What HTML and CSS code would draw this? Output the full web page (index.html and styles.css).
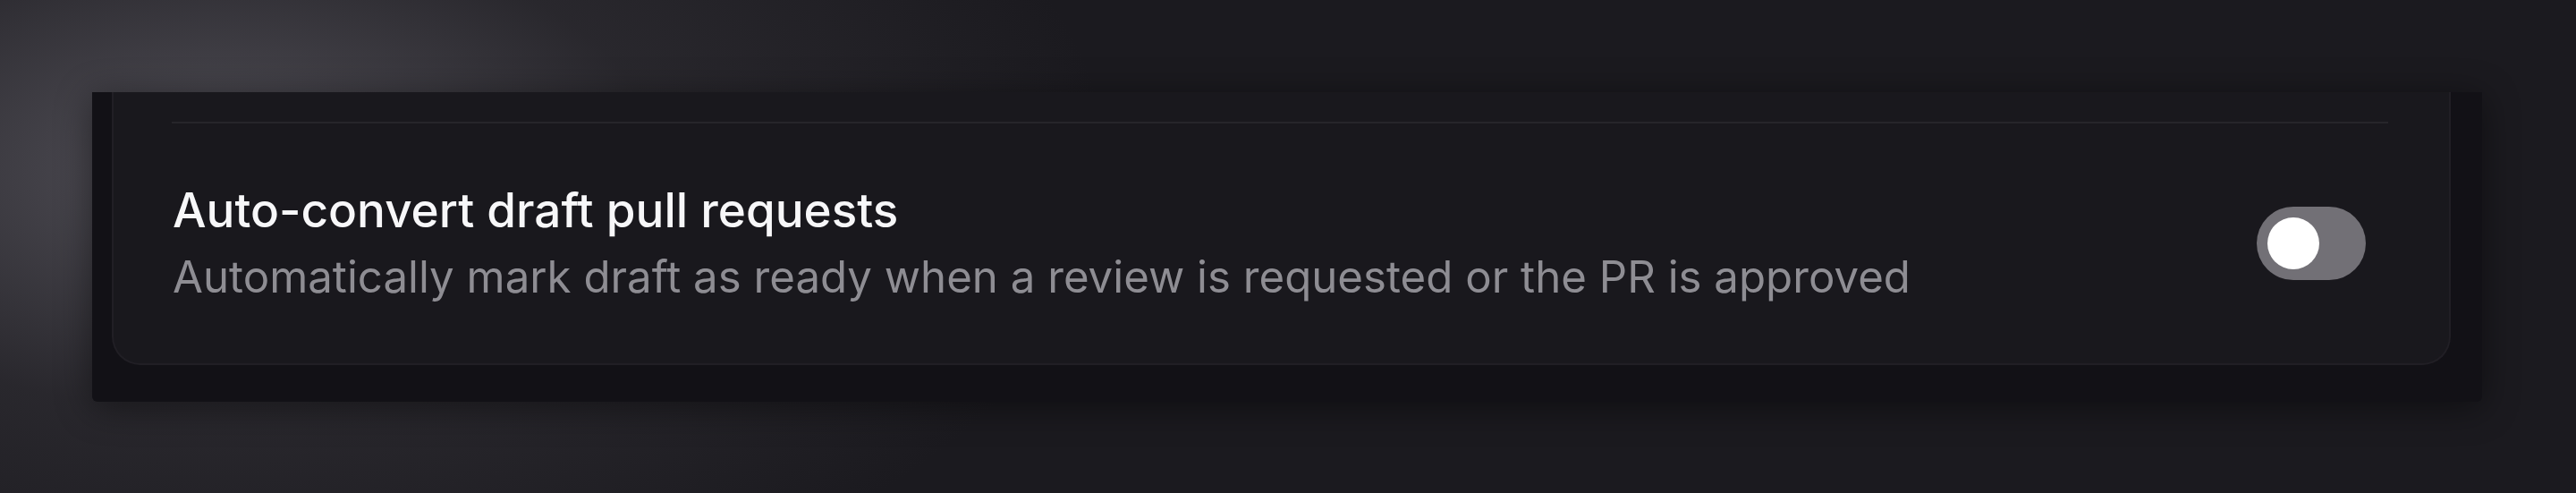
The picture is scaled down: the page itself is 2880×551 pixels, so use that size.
FILE: index.html
```html
<!DOCTYPE html>
<html lang="en">
<head>
<meta charset="utf-8">
<title>Settings</title>
<link rel="stylesheet" href="styles.css">
</head>
<body>
<div class="page">
  <div class="panel">
    <div class="card">
      <div class="divider"></div>
      <div class="row">
        <div class="text">
          <div class="title">Auto-convert draft pull requests</div>
          <div class="desc">Automatically mark draft as ready when a review is requested or the PR is approved</div>
        </div>
        <div class="toggle"><div class="knob"></div></div>
      </div>
    </div>
  </div>
</div>
</body>
</html>
```
FILE: styles.css
```css
html, body {
  margin: 0;
  padding: 0;
}
body {
  width: 2880px;
  height: 551px;
  overflow: hidden;
  background:
    radial-gradient(ellipse 1000px 540px at 240px 190px, rgba(88, 86, 94, 0.9), rgba(58, 56, 62, 0.45) 50%, rgba(27, 26, 31, 0) 100%),
    #1b1a1f;
  font-family: Inter, "Noto Sans", sans-serif;
}
.page {
  padding: 103px 0 0 103px;
}
.panel {
  width: 2672px;
  box-sizing: border-box;
  padding: 0 35px 41px 22px;
  background: #121116;
  border-radius: 0 0 6px 6px;
  box-shadow: 0 6px 40px rgba(0, 0, 0, 0.45);
}
.card {
  background: #19181d;
  border: 2px solid #211f25;
  border-top: none;
  border-radius: 0 0 32px 32px;
  padding-top: 33px;
}
.divider {
  height: 2px;
  background: #26252a;
  margin: 0 68px 0 65px;
}
.row {
  height: 268px;
  display: flex;
  align-items: center;
  justify-content: space-between;
  padding: 0 93px 0 66px;
}
.text {
  display: flex;
  flex-direction: column;
  gap: 12px;
}
.title {
  color: #f7f7f9;
  font-size: 53px;
  font-weight: 500;
  line-height: 62px;
}
.desc {
  color: #8e8d93;
  font-size: 49.2px;
  font-weight: 400;
  line-height: 62px;
}
.toggle {
  width: 122px;
  height: 82px;
  border-radius: 41px;
  background: #727076;
  display: flex;
  align-items: center;
  padding: 0 12px;
  box-sizing: border-box;
}
.knob {
  width: 58px;
  height: 58px;
  border-radius: 50%;
  background: #ffffff;
}
```
